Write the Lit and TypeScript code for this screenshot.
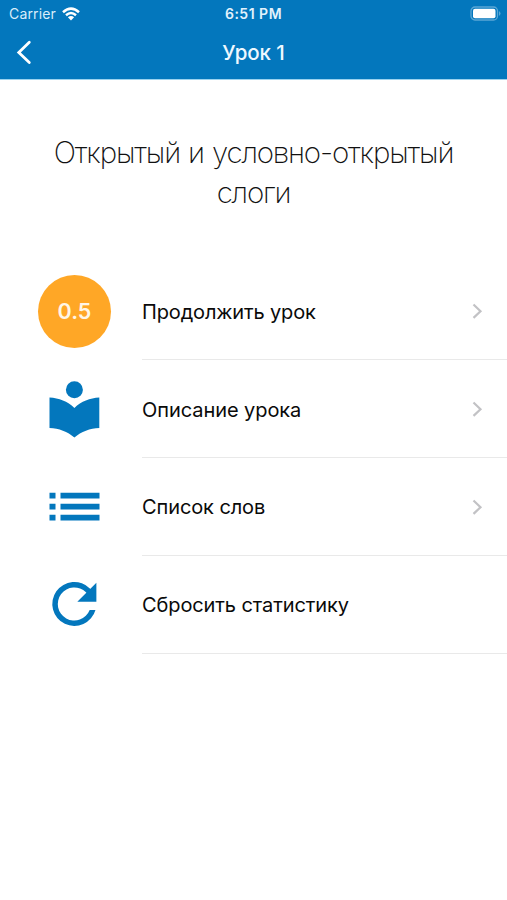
import { LitElement, html, css, svg } from "lit";
import { customElement } from "lit/decorators.js";

const book = svg`<circle cx="36.4" cy="29.7" r="8.5"/><path d="M11.5 37.6C21 38 29.500 41.500 36.400 48C43.300 41.500 52 38 61.300 37.600V68C52 68.400 43.300 71.500 36.400 77.600C29.500 71.500 21 68.400 11.500 68Z"/>`;
const list = svg`<path d="M11.500 34.700h6v5.900h-6zM22.500 34.700h39v5.900h-39zM11.500 45.700h6v5.900h-6zM22.500 45.700h39v5.900h-39zM11.500 56.700h6v5.900h-6zM22.500 56.700h39v5.900h-39z"/>`;
const reset = svg`<path d="M51.860 32.440A22 22 0 1 0 57.470 54H51.670A16.500 16.500 0 1 1 47.970 36.330L50 38.500L54 34.500Z"/><path d="M58.400 26.700V45.800H39.300Z"/>`;

@customElement("app-root")
export class AppRoot extends LitElement {
  static styles = css`
    :host { display: block; height: 900px; background: #fff; color: #0a0a0a; font-family: Inter, "Liberation Sans", sans-serif; overflow: hidden; }
    svg { display: block; }
    .top { height: 80px; background: #0377bd; border-bottom: 1px solid #9bd2ef; box-sizing: border-box; color: #fff; }
    .bar { display: grid; grid-template-columns: 1fr auto 1fr; align-items: center; }
    .status { height: 27px; font-size: 14px; }
    .carrier { display: flex; align-items: center; gap: 6px; padding-left: 9px; color: #d9edfa; letter-spacing: 0.15px; }
    .time { font-size: 14px; font-weight: 600; color: #e2f2fc; letter-spacing: 0.5px; }
    .battery { justify-self: end; padding-right: 6px; }
    .nav { height: 51px; }
    .back { padding-left: 16px; }
    .name { font-size: 20.500px; font-weight: 540; letter-spacing: -0.05px; color: #eef8ff; }
    h1 { margin: 0; padding: 52px 40px 0; box-sizing: border-box; height: 182px; text-align: center; font-size: 29.500px; line-height: 40px; font-weight: 200; letter-spacing: -1.18px; word-spacing: 1px; color: #111; }
    .row { height: 98px; display: flex; align-items: center; padding-left: 38px; }
    .lead { width: 73px; height: 98px; margin-right: 31px; display: flex; align-items: center; fill: #0377bd; }
    .badge { width: 73px; height: 73px; border-radius: 50%; background: #ffa726; color: #fff6e6; display: grid; place-items: center; font-size: 21.500px; font-weight: 560; }
    .body { flex: 1; height: 98px; box-sizing: border-box; border-bottom: 1px solid #e9e9e9; display: flex; align-items: center; justify-content: space-between; padding: 1px 24px 0 0; font-size: 20px; }
    .row:nth-child(-n + 2) .label { padding-top: 2px; }
  `;

  private row(lead: unknown, label: string, spacing: string, more = true) {
    return html`<div class="row">
      <div class="lead">${lead}</div>
      <div class="body">
        <span class="label" style="letter-spacing:${spacing}">${label}</span>
        ${more ? html`<svg width="12" height="18" viewBox="0 0 12 18"><path d="M2.500 2.500L9.500 9.200L2.500 15.900" fill="none" stroke="#c2c2c5" stroke-width="2.200"/></svg>` : ""}
      </div>
    </div>`;
  }

  private icon(shape: unknown) {
    return html`<svg width="73" height="98" viewBox="0 0 73 98">${shape}</svg>`;
  }

  render() {
    return html`
      <div class="top">
        <div class="bar status">
          <div class="carrier"><span>Carrier</span>
            <svg width="18" height="14" viewBox="0 0 18 14" fill="none" stroke="#fff" stroke-width="2.500"><path d="M1 5.200Q9-2 17 5.200M4 8.200Q9 3.900 14 8.200"/><path d="M9 13.500L5.900 10.300Q9 7.900 12.100 10.300Z" fill="#fff" stroke="none"/></svg>
          </div>
          <div class="time">6:51 PM</div>
          <svg class="battery" width="31" height="16" viewBox="0 0 31 16"><rect x="1" y="1" width="26.500" height="13" rx="4" fill="none" stroke="#5ba7d5" stroke-width="1.300"/><rect x="3" y="2.800" width="22.500" height="9.500" rx="2" fill="#fff"/><path d="M29 5Q32 7.500 29 10Z" fill="#5ba7d5"/></svg>
        </div>
        <div class="bar nav">
          <svg class="back" width="16" height="26" viewBox="0 0 16 26"><path d="M13.300 2.300L2.800 12.400L13.300 22.500" fill="none" stroke="#fff" stroke-width="2.800" stroke-linecap="round" stroke-linejoin="miter"/></svg>
          <div class="name">Урок 1</div>
        </div>
      </div>
      <h1>Открытый и условно-открытый слоги</h1>
      <main>
        ${this.row(html`<div class="badge">0.5</div>`, "Продолжить урок", "-0.15px")}
        ${this.row(this.icon(book), "Описание урока", "-0.07px")}
        ${this.row(this.icon(list), "Список слов", "-0.1px")}
        ${this.row(this.icon(reset), "Сбросить статистику", "-0.1px", false)}
      </main>`;
  }
}
